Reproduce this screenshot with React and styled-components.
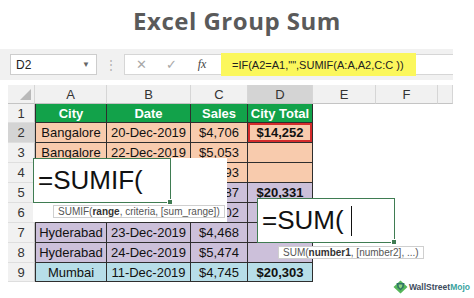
import React from 'react'
import styled, { createGlobalStyle } from 'styled-components'

const Global = createGlobalStyle`
  html, body { margin: 0; padding: 0; background: #fff; }
  body { font-family: "Liberation Sans", Arial, sans-serif; }
  * { box-sizing: border-box; }
`

const PEACH = '#f8cbad'
const PURPLE = '#ccc0da'
const BLUE = '#b7dee8'
const GREEN = '#12a24a'

const Page = styled.div`
  width: 474px;
  height: 298px;
  overflow: hidden;
  display: flex;
  flex-direction: column;
`

const Title = styled.div`
  height: 49px;
  padding-top: 8px;
  text-align: center;
  font-family: "Open Sans", sans-serif;
  font-weight: 700;
  font-size: 24px;
  letter-spacing: 0.5px;
  line-height: 26px;
  color: #5a5a5a;
`

const FormulaBar = styled.div`
  width: 453px;
  height: 31px;
  background: #f1f1f1;
  display: flex;
  align-items: center;
`

const NameBox = styled.div`
  margin-left: 10px;
  width: 87px;
  height: 21px;
  background: #fff;
  border: 1px solid #cdcdcd;
  display: flex;
  align-items: center;
  justify-content: space-between;
  padding: 0 6px 0 5px;
  font-size: 12px;
  color: #222;
`

const Caret = styled.span`
  font-size: 8px;
  color: #666;
`

const Dots = styled.div`
  width: 27px;
  text-align: center;
  color: #b0b0b0;
  font-size: 12px;
`

const InputArea = styled.div`
  flex: 1;
  height: 21px;
  background: #fff;
  border: 1px solid #d6d6d6;
  border-right: none;
  display: flex;
  align-items: center;
`

const Tool = styled.span`
  width: ${p => p.$w}px;
  text-align: center;
  color: ${p => p.$dark ? '#444' : '#a8a8a8'};
  font-size: ${p => p.$size || 13}px;
  font-family: ${p => p.$serif ? '"Liberation Serif", serif' : 'inherit'};
  font-style: ${p => p.$serif ? 'italic' : 'normal'};
`

const Formula = styled.div`
  margin-left: 2px;
  width: 195px;
  height: 23px;
  margin-top: -1px;
  margin-bottom: -1px;
  background: #fbf75c;
  display: flex;
  align-items: center;
  padding-left: 11px;
  font-size: 11px;
  color: #222;
  white-space: nowrap;
`

const Sheet = styled.div`
  position: relative;
  margin-top: 5px;
  margin-left: 8px;
  width: 445px;
  display: grid;
  grid-template-columns: 27px 72px 84px 57px 65px 63px 62px 15px;
  grid-template-rows: 19px 19px 20px 20px 20px 20px 20px 20px 20px 19px;
`

const ColHead = styled.div`
  background: ${p => p.$sel ? '#d4d4d4' : '#f1f1f1'};
  border-right: 1px solid #d6d6d6;
  border-bottom: 1px solid #c4c4c4;
  display: flex;
  align-items: center;
  justify-content: center;
  font-size: 13px;
  color: #333;
`

const Corner = styled(ColHead)`
  position: relative;
  &::after {
    content: "";
    position: absolute;
    right: 3px;
    bottom: 3px;
    border-left: 11px solid transparent;
    border-bottom: 11px solid #b9b9b9;
  }
`

const RowHead = styled.div`
  background: ${p => p.$sel ? '#d4d4d4' : '#f1f1f1'};
  border-right: 1px solid #c4c4c4;
  border-bottom: 1px solid #dedede;
  display: flex;
  align-items: center;
  justify-content: center;
  font-size: 13px;
  color: #333;
`

const Cell = styled.div`
  background: ${p => p.$bg};
  border-right: 1px solid #2e2e2e;
  border-bottom: 1px solid #2e2e2e;
  border-left: ${p => p.$first ? '1px solid #2e2e2e' : 'none'};
  display: flex;
  align-items: center;
  justify-content: center;
  font-size: 13px;
  font-weight: ${p => p.$bold ? 700 : 400};
  color: ${p => p.$head ? '#fff' : '#111'};
  white-space: nowrap;
  box-shadow: ${p => p.$active ? 'inset 0 0 0 2px #d42b2b' : 'none'};
`

const Blank = styled.div``

const EditPanel = styled.div`
  position: absolute;
  left: ${p => p.$x}px;
  top: ${p => p.$y}px;
  width: ${p => p.$w}px;
  height: ${p => p.$h}px;
  background: ${p => p.$fill ? '#fff' : 'transparent'};
`

const EditBox = styled.div`
  position: relative;
  width: 138px;
  height: 45px;
  background: #fff;
  border: 1.5px solid #3f7c52;
  display: flex;
  align-items: center;
  padding-left: 4px;
  font-size: 26px;
  color: #111;
  &::after {
    content: "";
    position: absolute;
    right: -3px;
    bottom: -3px;
    width: 4px;
    height: 4px;
    background: #3f7c52;
    border: 1px solid #fff;
  }
`

const Cursor = styled.span`
  display: inline-block;
  width: 1px;
  height: 30px;
  margin-left: 7px;
  background: #111;
`

const Tip = styled.div`
  position: absolute;
  left: ${p => p.$x}px;
  top: ${p => p.$y}px;
  height: 13px;
  background: #fff;
  border: 1px solid #cfcfcf;
  padding: 0 4px;
  font-size: 10px;
  line-height: 11px;
  color: #555;
  white-space: nowrap;
  b { color: #333; }
`

const Footer = styled.div`
  display: flex;
  justify-content: flex-end;
  align-items: center;
  margin-top: -2px;
  padding-right: 4px;
  gap: 1px;
`

const Brand = styled.span`
  font-size: 8.5px;
  font-weight: 700;
  color: #3d4b5c;
  span { color: #3aa3a0; }
`

// rows 4-6 of A and B sit under the =SUMIF( editor, so they are left empty
const rows = [
  { bg: GREEN, head: true, cells: ['City', 'Date', 'Sales', 'City Total'] },
  { bg: PEACH, cells: ['Bangalore', '20-Dec-2019', '$4,706', '$14,252'] },
  { bg: PEACH, cells: ['Bangalore', '22-Dec-2019', '$5,053', ''] },
  { bg: PEACH, cells: ['', '', '$4,493', ''] },
  { bg: PURPLE, cells: ['', '', '$4,887', '$20,331'] },
  { bg: PURPLE, cells: ['', '', '$5,502', ''] },
  { bg: PURPLE, cells: ['Hyderabad', '23-Dec-2019', '$4,468', ''] },
  { bg: PURPLE, cells: ['Hyderabad', '24-Dec-2019', '$5,474', ''] },
  { bg: BLUE, cells: ['Mumbai', '11-Dec-2019', '$4,745', '$20,303'] },
]

const Logo = () => (
  <svg width="15" height="14" viewBox="0 0 15 14">
    <polygon points="7.5,0.5 14.5,7 7.5,13.5 0.5,7" fill="#56b65a" />
    <polygon points="3.5,3 11.5,3 10.5,7.5 7.5,10.5 4.5,7.5" fill="#2e7466" />
    <polygon points="5.5,4.5 9.5,4.5 9,7 7.5,8.5 6,7" fill="#8fd17f" />
  </svg>
)

export default function App() {
  return (
    <Page>
      <Global />
      <Title>Excel Group Sum</Title>
      <FormulaBar>
        <NameBox>D2<Caret>▼</Caret></NameBox>
        <Dots>⋮</Dots>
        <InputArea>
          <Tool $w={32} $size={13}>✕</Tool>
          <Tool $w={28} $size={13}>✓</Tool>
          <Tool $w={34} $size={12} $serif $dark>fx</Tool>
          <Formula>=IF(A2=A1,"",SUMIF(A:A,A2,C:C ))</Formula>
        </InputArea>
      </FormulaBar>
      <Sheet>
        <Corner />
        {['A', 'B', 'C', 'D', 'E', 'F', ''].map(c => (
          <ColHead key={c || 'g'} $sel={c === 'D'}>{c}</ColHead>
        ))}
        {rows.map((r, i) => (
          <React.Fragment key={i}>
            <RowHead $sel={i === 1}>{i + 1}</RowHead>
            {r.cells.map((v, j) => (
              <Cell
                key={j}
                $bg={r.bg}
                $head={r.head}
                $first={j === 0}
                $bold={r.head || j === 3}
                $active={i === 1 && j === 3}
              >
                {v}
              </Cell>
            ))}
            <Blank />
            <Blank />
            <Blank />
          </React.Fragment>
        ))}

        <EditPanel $x={25} $y={73} $w={194} $h={64} $fill>
          <EditBox>=SUMIF(</EditBox>
          <Tip $x={20} $y={47}>SUMIF(<b>range</b>, criteria, [sum_range])</Tip>
        </EditPanel>

        <EditPanel $x={249} $y={113} $w={170} $h={60}>
          <EditBox>=SUM(<Cursor /></EditBox>
          <Tip $x={21} $y={48}>SUM(<b>number1</b>, [number2], ...)</Tip>
        </EditPanel>
      </Sheet>
      <Footer>
        <Logo />
        <Brand>WallStreet<span>Mojo</span></Brand>
      </Footer>
    </Page>
  )
}
